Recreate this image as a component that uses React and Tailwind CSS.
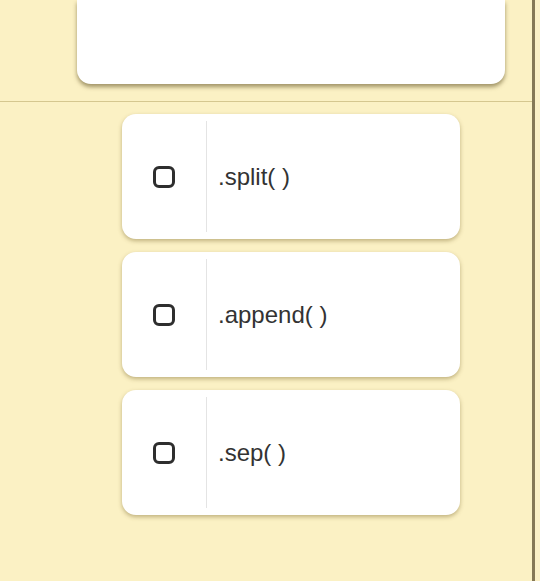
const options = [".split( )", ".append( )", ".sep( )"];

function CheckBox() {
    return (
        <div className="w-[22px] h-[22px] rounded-[6px] border-[3px] border-[#2e2e2e]" />
    );
}

function OptionCard({ label }) {
    return (
        <div className="flex h-[125px] w-[338px] rounded-[14px] bg-white shadow-[0_2px_4px_rgba(120,100,40,0.45)]">
            <div className="flex w-[84px] items-center justify-center">
                <CheckBox />
            </div>
            <div className="my-[7px] w-px bg-[#e4e4e4]" />
            <div className="flex items-center pl-[11px] text-[24px] text-[#333]">
                {label}
            </div>
        </div>
    );
}

export default function App() {
    return (
        <div
            className="flex h-[581px] w-[540px] bg-[#fbf1c4] overflow-hidden"
            style={{ fontFamily: "Helvetica, 'Liberation Sans', Arial, sans-serif" }}
        >
            <div className="flex w-[532px] flex-col">
                <div className="flex h-[101px] justify-center pr-[27px] pl-[77px]">
                    <div className="h-[84px] w-[428px] rounded-b-[14px] bg-white shadow-[0_3px_4px_rgba(100,85,40,0.6)]" />
                </div>
                <div className="h-px bg-[#d5c78f]" />
                <div className="flex flex-col gap-[13px] pt-[12px] pl-[122px]">
                    {options.map((o) => (
                        <OptionCard key={o} label={o} />
                    ))}
                </div>
            </div>
            <div className="w-[3px] bg-[#857856]" />
            <div className="flex-1 bg-[#fbf0c6]" />
        </div>
    );
}
